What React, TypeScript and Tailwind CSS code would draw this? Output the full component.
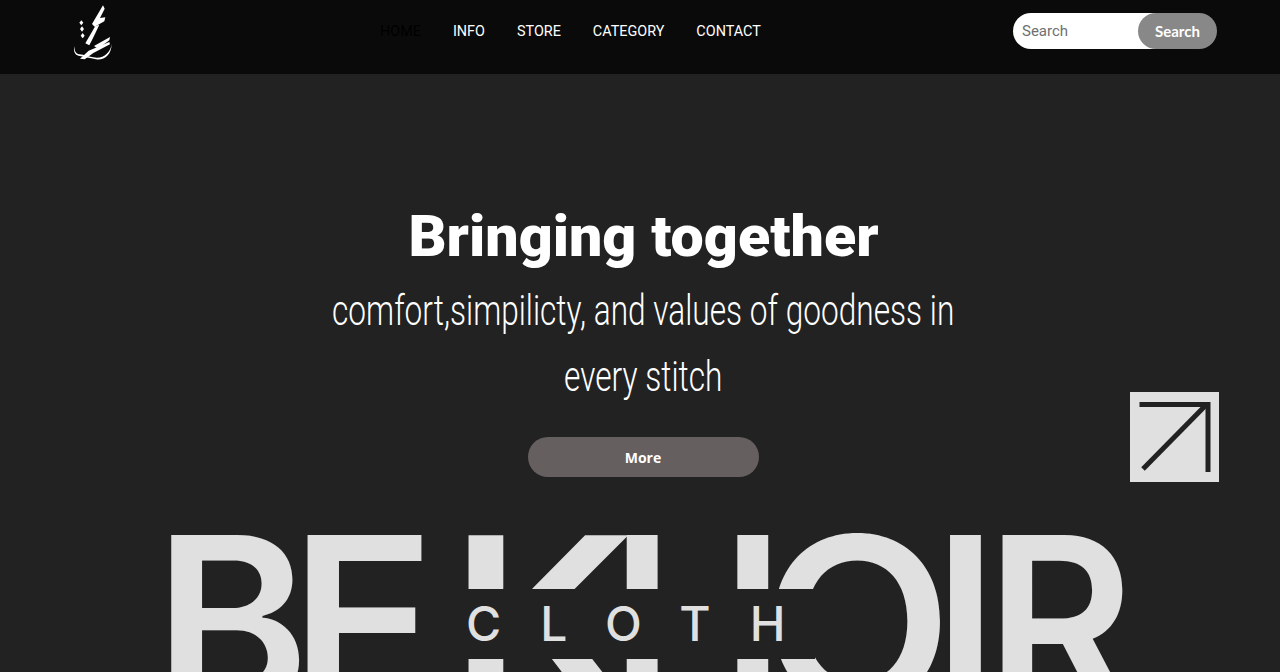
export default function App() {
  const links = ["INFO", "STORE", "CATEGORY", "CONTACT"];
  return (
    <div className="h-[672px] w-[1280px] overflow-hidden bg-[#222222]">
      <header className="flex h-[74px] items-center bg-[#0a0a0a] pl-[68px] pr-[63px]">
        <svg viewBox="0 0 144 180" width="48" height="60" className="-mt-[10px] shrink-0" fill="#fff">
          <path d="M105 10 L110 20 L96 48 L112 46 L109 58 L80 74 L72 66 Z" />
          <path d="M82 72 L94 68 L78 102 L64 130 L52 124 Z" />
          <path d="M126 105 L124 115 L90 140 L78 132 Z" />
          <path d="M124 120 L126 127 L76 153 L50 172 L36 170 L62 146 Z" />
          <path d="M40 55 L46 62 L40 70 L34 62 Z" />
          <path d="M42 73 L48 81 L42 89 L36 81 Z" />
          <path d="M44 93 L50 101 L44 109 L38 101 Z" />
          <path d="M20 132 C14 148 22 160 34 162 C50 164 64 168 84 172 C108 176 130 160 131 126 C128 150 108 168 86 167 C66 166 48 158 34 157 C24 156 18 146 20 132 Z" />
        </svg>
        <nav className="ml-[264px] -mt-[10px] flex gap-[32px] font-['Roboto',sans-serif] text-[14.4px] font-normal">
          <a className="text-black">HOME</a>
          {links.map((l) => (
            <a key={l} className="text-white">{l}</a>
          ))}
        </nav>
        <div className="ml-auto -mt-[12px] flex h-[36px] w-[204px]">
          <div className="w-[143px] shrink-0 rounded-l-full bg-white pl-[9px] font-['Roboto',sans-serif] text-[15px] leading-[36px] text-[#6f6f6f]">Search</div>
          <div className="-ml-[18px] w-[79px] shrink-0 rounded-full bg-[#888888] text-center font-['Lato',sans-serif] text-[15px] font-bold leading-[37px] text-white">Search</div>
        </div>
      </header>
      <main className="relative h-[598px] overflow-hidden">
        <div className="flex flex-col items-center pl-[6px] pt-[127px] text-white">
          <h1 className="h-[77px] scale-x-[1.02] whitespace-nowrap font-['Roboto',sans-serif] text-[58px] font-black leading-[70px]">Bringing together</h1>
          <p className="h-[66px] scale-x-[0.753] whitespace-nowrap font-['Roboto',sans-serif] text-[42px] font-light leading-[66px]">comfort,simpilicty, and values of goodness in</p>
          <p className="h-[66px] scale-x-[0.753] whitespace-nowrap font-['Roboto',sans-serif] text-[42px] font-light leading-[66px]">every stitch</p>
          <button className="mt-[27px] h-[40px] w-[231px] rounded-full bg-[#665f5f] font-['Open_Sans',sans-serif] text-[14px] font-bold text-white">More</button>
        </div>
        <div className="absolute left-[1129.5px] top-[318px] h-[90px] w-[89.5px] bg-[#e0e0e0]">
          <svg viewBox="0 0 90 90" width="90" height="90" fill="none" stroke="#222" strokeWidth="5">
            <path d="M9.5 12.5 H78 V80" />
            <path d="M76 13 L13 77" />
          </svg>
        </div>
        <div className="absolute left-[170px] top-[407px] flex whitespace-nowrap font-['Inter',sans-serif] text-[236px] font-semibold leading-[280px] text-[#e0e0e0]">
          <span className="-ml-[16px]">B</span>
          <span className="-ml-[20px] origin-left scale-x-[1.02]">E</span>
          <span className="ml-[17px] origin-left scale-x-[1.13]">K</span>
          <span className="-ml-[6px]">H</span>
          <span className="-ml-[23px] origin-left scale-x-[1.05]">O</span>
          <span className="-ml-[11px]">I</span>
          <span className="-ml-[12px] origin-left scale-x-[0.96]">R</span>
        </div>
        <div className="absolute left-[465px] top-[515px] flex h-[70px] w-[350px] items-center bg-[#222222] pl-[1px] font-['Inter',sans-serif] text-[48px] font-medium tracking-[39px] text-[#e0e0e0]">CLOTH</div>
      </main>
    </div>
  );
}
